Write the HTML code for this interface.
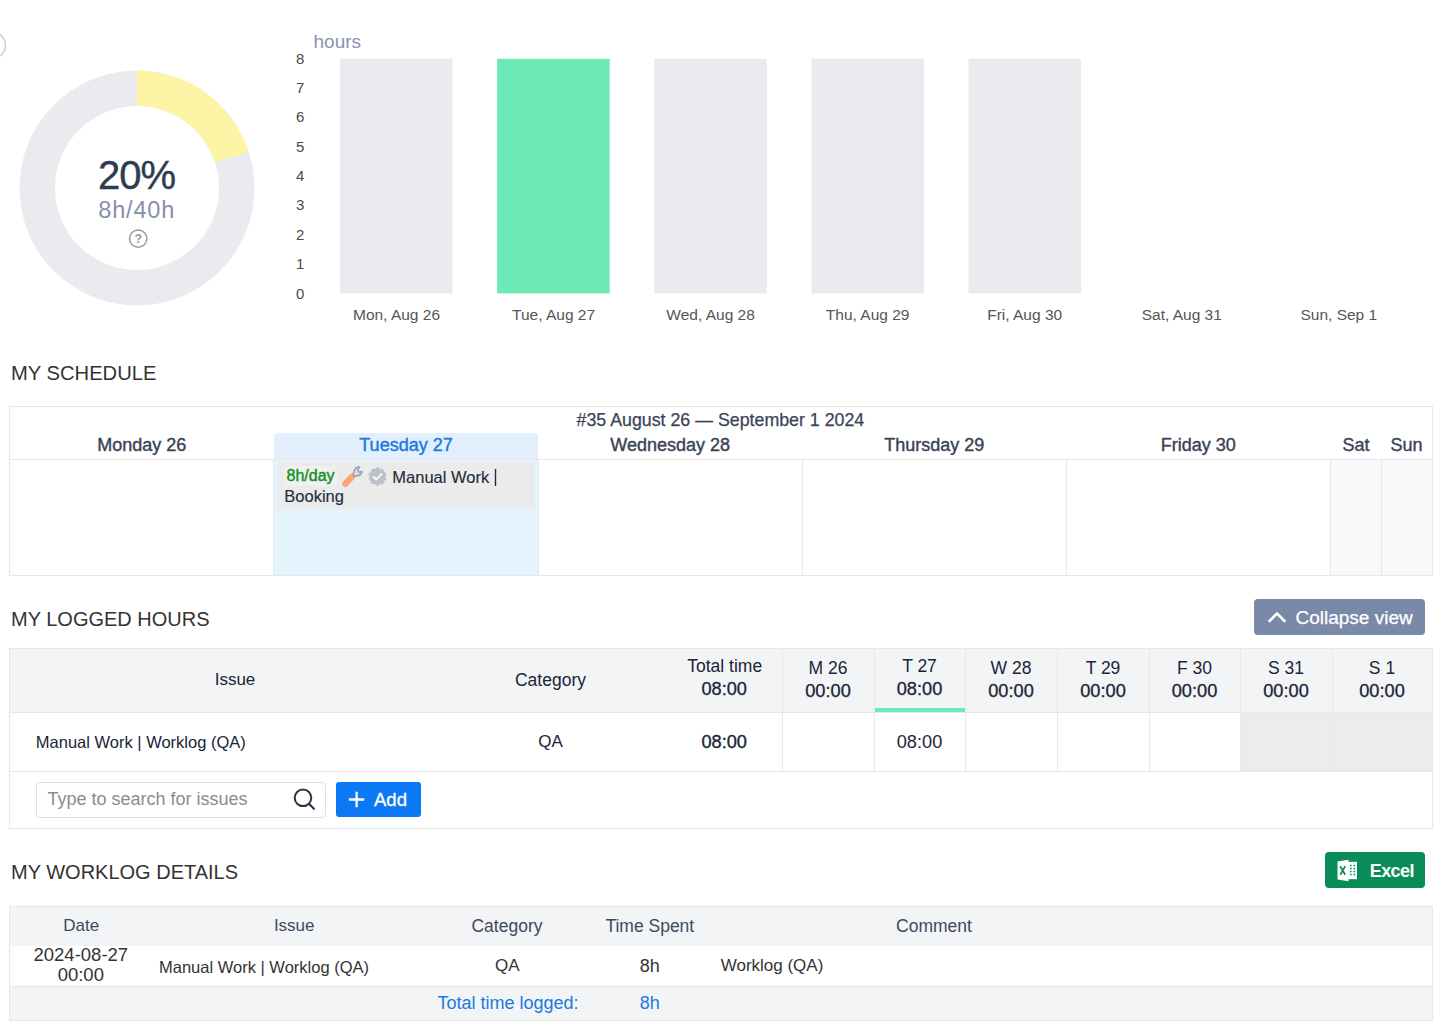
<!DOCTYPE html>
<html><head><meta charset="utf-8">
<style>
*{box-sizing:border-box;margin:0;padding:0}
html,body{width:1440px;height:1024px;overflow:hidden;background:#fff;font-family:"Liberation Sans",sans-serif}
.t{position:absolute;white-space:nowrap;line-height:0}
.r{position:absolute}
</style></head>
<body>
<svg class="r" style="left:0;top:0" width="300" height="330">
  <circle cx="-7.5" cy="45.4" r="13" fill="none" stroke="#cfcfcf" stroke-width="1.5"/>
  <circle cx="137" cy="188" r="99.75" fill="none" stroke="#e9ebef" stroke-width="35.5"/>
  <path d="M137 70.5 A117.5 117.5 0 0 1 248.75 151.7 L215.2 162.6 A82.2 82.2 0 0 0 137 105.8 Z" fill="#fdf5a5"/>
  <circle cx="138.2" cy="238.6" r="8.6" fill="none" stroke="#9a9a9a" stroke-width="1.5"/>
  <text x="138.3" y="243.2" text-anchor="middle" font-family="Liberation Sans" font-size="12.5" font-weight="700" fill="#9a9a9a">?</text>
</svg>
<div class="t" style="left:-163.50px;width:600px;text-align:center;top:175.14px;font-size:40px;color:#2f3b52;letter-spacing:-1px;-webkit-text-stroke:0.4px #2f3b52;">20%</div>
<div class="t" style="left:-163.30px;width:600px;text-align:center;top:210.16px;font-size:23.5px;color:#8590ac;letter-spacing:0.8px;">8h/40h</div>
<div class="t" style="left:313.50px;top:42.12px;font-size:19px;color:#8a93b0;">hours</div>
<div class="t" style="left:0.20px;width:600px;text-align:center;top:58.70px;font-size:15px;color:#4a4a4a;">8</div>
<div class="t" style="left:0.20px;width:600px;text-align:center;top:88.05px;font-size:15px;color:#4a4a4a;">7</div>
<div class="t" style="left:0.20px;width:600px;text-align:center;top:117.40px;font-size:15px;color:#4a4a4a;">6</div>
<div class="t" style="left:0.20px;width:600px;text-align:center;top:146.75px;font-size:15px;color:#4a4a4a;">5</div>
<div class="t" style="left:0.20px;width:600px;text-align:center;top:176.10px;font-size:15px;color:#4a4a4a;">4</div>
<div class="t" style="left:0.20px;width:600px;text-align:center;top:205.45px;font-size:15px;color:#4a4a4a;">3</div>
<div class="t" style="left:0.20px;width:600px;text-align:center;top:234.80px;font-size:15px;color:#4a4a4a;">2</div>
<div class="t" style="left:0.20px;width:600px;text-align:center;top:264.15px;font-size:15px;color:#4a4a4a;">1</div>
<div class="t" style="left:0.20px;width:600px;text-align:center;top:293.50px;font-size:15px;color:#4a4a4a;">0</div>
<svg class="r" style="left:0;top:0" width="1440" height="300"><rect x="340.00" y="58.8" width="112.6" height="234.6" fill="#e9ebef"/><rect x="497.12" y="58.8" width="112.6" height="234.6" fill="#6ce9b6"/><rect x="654.25" y="58.8" width="112.6" height="234.6" fill="#e9ebef"/><rect x="811.38" y="58.8" width="112.6" height="234.6" fill="#e9ebef"/><rect x="968.50" y="58.8" width="112.6" height="234.6" fill="#e9ebef"/></svg>
<div class="t" style="left:96.50px;width:600px;text-align:center;top:315.33px;font-size:15.5px;color:#555;">Mon, Aug 26</div>
<div class="t" style="left:253.55px;width:600px;text-align:center;top:315.33px;font-size:15.5px;color:#555;">Tue, Aug 27</div>
<div class="t" style="left:410.60px;width:600px;text-align:center;top:315.33px;font-size:15.5px;color:#555;">Wed, Aug 28</div>
<div class="t" style="left:567.65px;width:600px;text-align:center;top:315.33px;font-size:15.5px;color:#555;">Thu, Aug 29</div>
<div class="t" style="left:724.70px;width:600px;text-align:center;top:315.33px;font-size:15.5px;color:#555;">Fri, Aug 30</div>
<div class="t" style="left:881.75px;width:600px;text-align:center;top:315.33px;font-size:15.5px;color:#555;">Sat, Aug 31</div>
<div class="t" style="left:1038.80px;width:600px;text-align:center;top:315.33px;font-size:15.5px;color:#555;">Sun, Sep 1</div>
<div class="t" style="left:11.00px;top:372.80px;font-size:20.2px;color:#333;">MY SCHEDULE</div>
<div class="r" style="left:9px;top:406px;width:1424px;height:170px;background:#fff;border:1px solid #e8e8e9;box-sizing:border-box;"></div>
<div class="r" style="left:274px;top:433px;width:264px;height:26px;background:#e3effc;border-radius:4px 4px 0 0;"></div>
<div class="r" style="left:10px;top:459px;width:1422px;height:1px;background:#e8e8e9;"></div>
<div class="r" style="left:274px;top:460px;width:264px;height:115px;background:#e5f3fd;"></div>
<div class="r" style="left:1331px;top:460px;width:101px;height:115px;background:#f8f9fa;"></div>
<div class="r" style="left:273px;top:460px;width:1px;height:115px;background:#e8e8e9;"></div>
<div class="r" style="left:538px;top:460px;width:1px;height:115px;background:#e8e8e9;"></div>
<div class="r" style="left:802px;top:460px;width:1px;height:115px;background:#e8e8e9;"></div>
<div class="r" style="left:1066px;top:460px;width:1px;height:115px;background:#e8e8e9;"></div>
<div class="r" style="left:1330px;top:460px;width:1px;height:115px;background:#e8e8e9;"></div>
<div class="r" style="left:1381px;top:460px;width:1px;height:115px;background:#e8e8e9;"></div>
<div class="t" style="left:420.40px;width:600px;text-align:center;top:419.83px;font-size:17.8px;color:#3a4357;-webkit-text-stroke:0.25px #3a4357;">#35 August 26 — September 1 2024</div>
<div class="t" style="left:-158.30px;width:600px;text-align:center;top:445.46px;font-size:18px;color:#3a4357;-webkit-text-stroke:0.4px #3a4357;">Monday 26</div>
<div class="t" style="left:106.00px;width:600px;text-align:center;top:445.46px;font-size:18px;color:#1a7ae0;-webkit-text-stroke:0.4px #1a7ae0;">Tuesday 27</div>
<div class="t" style="left:370.20px;width:600px;text-align:center;top:445.46px;font-size:18px;color:#3a4357;-webkit-text-stroke:0.4px #3a4357;">Wednesday 28</div>
<div class="t" style="left:634.30px;width:600px;text-align:center;top:445.46px;font-size:18px;color:#3a4357;-webkit-text-stroke:0.4px #3a4357;">Thursday 29</div>
<div class="t" style="left:898.30px;width:600px;text-align:center;top:445.46px;font-size:18px;color:#3a4357;-webkit-text-stroke:0.4px #3a4357;">Friday 30</div>
<div class="t" style="left:1056.00px;width:600px;text-align:center;top:445.46px;font-size:18px;color:#3a4357;-webkit-text-stroke:0.4px #3a4357;">Sat</div>
<div class="t" style="left:1106.50px;width:600px;text-align:center;top:445.46px;font-size:18px;color:#3a4357;-webkit-text-stroke:0.4px #3a4357;">Sun</div>
<div class="r" style="left:278px;top:462px;width:257px;height:47px;background:#ebebeb;"></div>
<div class="r" style="left:284px;top:466px;width:53px;height:20px;background:#f1f2ef;border-radius:2px;"></div>
<div class="t" style="left:286.50px;top:476.16px;font-size:16px;color:#16902a;-webkit-text-stroke:0.45px #16902a;">8h/day</div>
<svg class="r" style="left:336px;top:460px" width="30" height="30" viewBox="0 0 30 30">
 <path d="M9.3 23.8 L15.8 16.8" stroke="#f8a775" stroke-width="6.3" stroke-linecap="round"/>
 <path d="M17.2 14.6 L18.6 9.5 A4.6 4.6 0 0 1 23.6 7.2 L21.6 9.8 L23.2 12.2 L26 11.4 A4.6 4.6 0 0 1 22.2 15.6 L17.8 16.6 Z" fill="#d9dbe0" stroke="#9a9ea8" stroke-width="1.5" stroke-linejoin="round"/>
</svg>
<svg class="r" style="left:367px;top:466px" width="21" height="21" viewBox="0 0 21 21">
 <path d="M10.5 1 L13 3 L16 2.8 L17 5.8 L19.6 7.4 L18.6 10.5 L19.6 13.6 L17 15.2 L16 18.2 L13 18 L10.5 20 L8 18 L5 18.2 L4 15.2 L1.4 13.6 L2.4 10.5 L1.4 7.4 L4 5.8 L5 2.8 L8 3 Z" fill="#bdc1ca"/>
 <path d="M6.5 10.8 L9.3 13.5 L14.5 8" stroke="#fff" stroke-width="1.8" fill="none" stroke-linecap="round" stroke-linejoin="round"/>
</svg>
<div class="t" style="left:392.30px;top:476.78px;font-size:16.5px;color:#262c40;-webkit-text-stroke:0.15px #262c40;">Manual Work</div>
<div class="r" style="left:495px;top:469px;width:1px;height:17px;background:#262c40;transform:scaleX(1.4);"></div>
<div class="t" style="left:284.30px;top:496.48px;font-size:16.5px;color:#262c40;-webkit-text-stroke:0.15px #262c40;">Booking</div>
<div class="t" style="left:11.00px;top:618.77px;font-size:20px;color:#333;">MY LOGGED HOURS</div>
<div class="r" style="left:9px;top:648px;width:1424px;height:181px;background:#fff;border:1px solid #e8e8e9;box-sizing:border-box;"></div>
<div class="r" style="left:10px;top:649px;width:1422px;height:63px;background:#f2f4f6;"></div>
<div class="r" style="left:10px;top:712px;width:1422px;height:1px;background:#e8e8e9;"></div>
<div class="r" style="left:1241px;top:713px;width:191px;height:58px;background:#ececec;"></div>
<div class="r" style="left:10px;top:771px;width:1422px;height:1px;background:#e8e8e9;"></div>
<div class="r" style="left:782px;top:648px;width:1px;height:123px;background:#e8e8e9;"></div>
<div class="r" style="left:874px;top:648px;width:1px;height:123px;background:#e8e8e9;"></div>
<div class="r" style="left:965px;top:648px;width:1px;height:123px;background:#e8e8e9;"></div>
<div class="r" style="left:1057px;top:648px;width:1px;height:123px;background:#e8e8e9;"></div>
<div class="r" style="left:1149px;top:648px;width:1px;height:123px;background:#e8e8e9;"></div>
<div class="r" style="left:1240px;top:648px;width:1px;height:123px;background:#e8e8e9;"></div>
<div class="r" style="left:1332px;top:648px;width:1px;height:123px;background:#e8e8e9;"></div>
<div class="r" style="left:875px;top:708px;width:90px;height:4px;background:#6ee8b4;"></div>
<div class="t" style="left:-65.00px;width:600px;text-align:center;top:680.11px;font-size:17px;color:#1c2438;">Issue</div>
<div class="t" style="left:250.50px;width:600px;text-align:center;top:679.94px;font-size:17.5px;color:#1c2438;">Category</div>
<div class="t" style="left:424.70px;width:600px;text-align:center;top:665.64px;font-size:17.5px;color:#1c2438;">Total time</div>
<div class="t" style="left:424.20px;width:600px;text-align:center;top:688.69px;font-size:18.2px;color:#1c2438;-webkit-text-stroke:0.3px #1c2438;">08:00</div>
<div class="t" style="left:528.00px;width:600px;text-align:center;top:668.24px;font-size:17.5px;color:#1c2438;">M 26</div>
<div class="t" style="left:528.00px;width:600px;text-align:center;top:691.39px;font-size:18.2px;color:#1c2438;-webkit-text-stroke:0.3px #1c2438;">00:00</div>
<div class="t" style="left:619.50px;width:600px;text-align:center;top:665.64px;font-size:17.5px;color:#1c2438;">T 27</div>
<div class="t" style="left:619.50px;width:600px;text-align:center;top:688.79px;font-size:18.2px;color:#1c2438;-webkit-text-stroke:0.3px #1c2438;">08:00</div>
<div class="t" style="left:711.00px;width:600px;text-align:center;top:668.24px;font-size:17.5px;color:#1c2438;">W 28</div>
<div class="t" style="left:711.00px;width:600px;text-align:center;top:691.39px;font-size:18.2px;color:#1c2438;-webkit-text-stroke:0.3px #1c2438;">00:00</div>
<div class="t" style="left:803.00px;width:600px;text-align:center;top:668.24px;font-size:17.5px;color:#1c2438;">T 29</div>
<div class="t" style="left:803.00px;width:600px;text-align:center;top:691.39px;font-size:18.2px;color:#1c2438;-webkit-text-stroke:0.3px #1c2438;">00:00</div>
<div class="t" style="left:894.50px;width:600px;text-align:center;top:668.24px;font-size:17.5px;color:#1c2438;">F 30</div>
<div class="t" style="left:894.50px;width:600px;text-align:center;top:691.39px;font-size:18.2px;color:#1c2438;-webkit-text-stroke:0.3px #1c2438;">00:00</div>
<div class="t" style="left:986.00px;width:600px;text-align:center;top:668.24px;font-size:17.5px;color:#1c2438;">S 31</div>
<div class="t" style="left:986.00px;width:600px;text-align:center;top:691.39px;font-size:18.2px;color:#1c2438;-webkit-text-stroke:0.3px #1c2438;">00:00</div>
<div class="t" style="left:1082.00px;width:600px;text-align:center;top:668.24px;font-size:17.5px;color:#1c2438;">S 1</div>
<div class="t" style="left:1082.00px;width:600px;text-align:center;top:691.39px;font-size:18.2px;color:#1c2438;-webkit-text-stroke:0.3px #1c2438;">00:00</div>
<div class="t" style="left:35.80px;top:741.98px;font-size:16.5px;color:#1c2438;">Manual Work | Worklog (QA)</div>
<div class="t" style="left:250.50px;width:600px;text-align:center;top:741.81px;font-size:17px;color:#1c2438;">QA</div>
<div class="t" style="left:424.20px;width:600px;text-align:center;top:741.99px;font-size:18.2px;color:#1c2438;-webkit-text-stroke:0.35px #1c2438;">08:00</div>
<div class="t" style="left:619.50px;width:600px;text-align:center;top:741.99px;font-size:18.2px;color:#1c2438;">08:00</div>
<div class="r" style="left:36px;top:782px;width:290px;height:36px;background:#fff;border:1px solid #dcdfe4;border-radius:4px;box-sizing:border-box;"></div>
<div class="t" style="left:47.50px;top:798.76px;font-size:18px;color:#8c8c8c;">Type to search for issues</div>
<svg class="r" style="left:290px;top:785px" width="28" height="28" viewBox="0 0 28 28">
 <circle cx="13" cy="12.8" r="8.3" fill="none" stroke="#2d3446" stroke-width="2"/>
 <path d="M19 18.8 L24 23.8" stroke="#2d3446" stroke-width="2.2" stroke-linecap="round"/>
</svg>
<div class="r" style="left:336px;top:782px;width:85px;height:35px;background:#0b79f3;border-radius:3px;"></div>
<svg class="r" style="left:346px;top:789px" width="22" height="22" viewBox="0 0 22 22">
 <path d="M10.6 2.8 V18.2 M2.9 10.5 H18.3" stroke="#fff" stroke-width="2.3" stroke-linecap="butt"/>
</svg>
<div class="t" style="left:374.00px;top:799.59px;font-size:18.5px;color:#fff;-webkit-text-stroke:0.3px #fff;">Add</div>
<div class="r" style="left:1254px;top:599px;width:171px;height:36px;background:#7b89a8;border-radius:4px;"></div>
<svg class="r" style="left:1266px;top:607.8px" width="22" height="16" viewBox="0 0 22 16">
 <path d="M3.5 13 L11 5.5 L18.5 13" stroke="#fff" stroke-width="2.6" fill="none" stroke-linecap="round" stroke-linejoin="round"/>
</svg>
<div class="t" style="left:1295.50px;top:618.02px;font-size:19px;color:#fff;-webkit-text-stroke:0.25px #fff;">Collapse view</div>
<div class="t" style="left:11.00px;top:872.07px;font-size:20px;color:#333;">MY WORKLOG DETAILS</div>
<div class="r" style="left:9px;top:906px;width:1424px;height:115px;background:#f3f4f6;border:1px solid #e8e8e9;box-sizing:border-box;"></div>
<div class="r" style="left:10px;top:946px;width:1422px;height:40px;background:#fff;"></div>
<div class="r" style="left:10px;top:986px;width:1422px;height:1px;background:#e8e8e9;"></div>
<div class="t" style="left:-218.80px;width:600px;text-align:center;top:926.41px;font-size:17px;color:#3d4a5e;">Date</div>
<div class="t" style="left:-5.80px;width:600px;text-align:center;top:926.41px;font-size:17px;color:#3d4a5e;">Issue</div>
<div class="t" style="left:207.00px;width:600px;text-align:center;top:926.24px;font-size:17.5px;color:#3d4a5e;">Category</div>
<div class="t" style="left:349.80px;width:600px;text-align:center;top:926.24px;font-size:17.5px;color:#3d4a5e;">Time Spent</div>
<div class="t" style="left:634.00px;width:600px;text-align:center;top:926.24px;font-size:17.5px;color:#3d4a5e;">Comment</div>
<div class="t" style="left:-219.20px;width:600px;text-align:center;top:955.29px;font-size:18.5px;color:#333;">2024-08-27</div>
<div class="t" style="left:-219.20px;width:600px;text-align:center;top:975.29px;font-size:18.5px;color:#333;">00:00</div>
<div class="t" style="left:159.00px;top:966.58px;font-size:16.5px;color:#333;">Manual Work | Worklog (QA)</div>
<div class="t" style="left:207.20px;width:600px;text-align:center;top:966.41px;font-size:17px;color:#333;">QA</div>
<div class="t" style="left:349.70px;width:600px;text-align:center;top:966.06px;font-size:18px;color:#333;">8h</div>
<div class="t" style="left:720.70px;top:966.41px;font-size:17px;color:#333;">Worklog (QA)</div>
<div class="t" style="left:208.00px;width:600px;text-align:center;top:1002.76px;font-size:18px;color:#1a7ae0;">Total time logged:</div>
<div class="t" style="left:349.70px;width:600px;text-align:center;top:1002.76px;font-size:18px;color:#1a7ae0;">8h</div>
<div class="r" style="left:1325px;top:852px;width:100px;height:36px;background:#0a8c58;border-radius:4px;"></div>
<svg class="r" style="left:1336px;top:859px" width="24" height="23" viewBox="0 0 24 23">
 <rect x="10.5" y="2.8" width="10.5" height="17.4" fill="#fff"/>
 <path d="M14 6.5 h1.6 M17.5 6.5 h1.6 M14 9.5 h1.6 M17.5 9.5 h1.6 M14 12.5 h1.6 M17.5 12.5 h1.6 M14 15.5 h1.6 M17.5 15.5 h1.6" stroke="#0a8c58" stroke-width="1.4"/>
 <path d="M1.5 2.5 L12.5 0.8 V22.2 L1.5 20.5 Z" fill="#fff"/>
 <path d="M4.2 7.2 L9.2 15.8 M9.2 7.2 L4.2 15.8" stroke="#0a8c58" stroke-width="1.7"/>
</svg>
<div class="t" style="left:1369.80px;top:870.66px;font-size:18px;color:#fff;font-weight:700;letter-spacing:-0.6px;">Excel</div>
</body></html>
